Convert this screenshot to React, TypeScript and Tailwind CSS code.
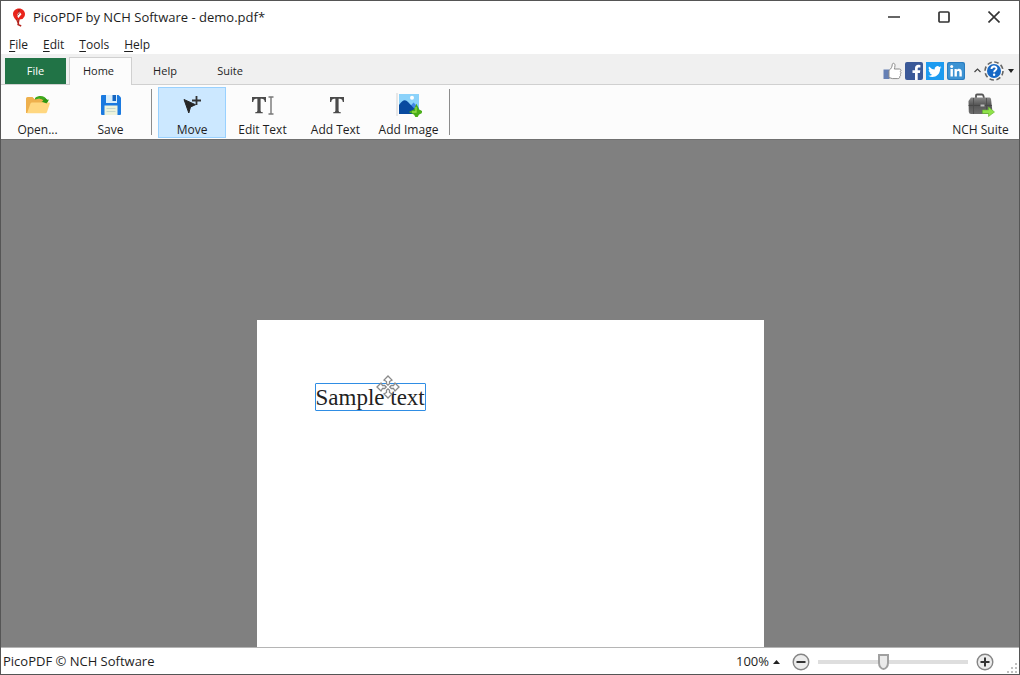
import { useState } from "react";
import type { ReactNode } from "react";

const UI_FONT = "font-['Open_Sans','Noto_Sans',sans-serif]";

const menus = ["File", "Edit", "Tools", "Help"];

function LogoIcon() {
  return (
    <svg width="14" height="20" viewBox="0 0 14 20">
      <path d="M7 1.500C3.500 1.500 1 4 1 7c0 2.600 1.500 4.300 3 6l3.500-.4L10.500 12C12 10.500 13 9 13 7c0-3-2.500-5.500-6-5.500z" fill="#e9251c" />
      <path d="M7.200 4.500l2.300 2.800-3.300 4L5 8z" fill="#fff" />
      <path d="M7 2v4.500l-1.500 2" fill="none" stroke="#8e1611" strokeWidth="1" />
      <path d="M4.500 12l2.300 5.500M7 12l-1 5.500 3.200 1.500" fill="none" stroke="#b3221b" strokeWidth="1.400" />
    </svg>
  );
}

function OpenIcon() {
  return (
    <svg width="26" height="22" viewBox="0 0 26 22">
      <path d="M1 4.500q0-1.500 1.500-1.500h5l2 2h10q1.500 0 1.500 1.500V19H1z" fill="#eeb04d" />
      <path d="M10 4c4-3 10-2.500 12 2l2-.5-2.500 5-5-3 2-.6C17 4.500 14 4 10 5.500z" fill="#3fa81c" />
      <path d="M5.500 9.500q.3-1 1.500-1h17q1.200 0 .8 1.200L22 18q-.4 1.200-1.600 1.200H2z" fill="#ffd780" />
      <path d="M20 4.500l3 1.500-1.500 3.500-4-2z" fill="#2f9413" />
    </svg>
  );
}

function SaveIcon() {
  return (
    <svg width="22" height="22" viewBox="0 0 22 22">
      <path d="M2 1h16.500L21 3.500V20q0 1-1 1H2q-1 0-1-1V2q0-1 1-1z" fill="#1b7ae0" />
      <path d="M6 1h11v8H6z" fill="#d9eefb" />
      <path d="M12.500 1H16v6h-3.500z" fill="#1565c0" />
      <path d="M4.500 11.500h13V21h-13z" fill="#eef3dc" />
      <path d="M6.500 14.500h9M6.500 17.500h9" stroke="#c6d8cc" />
    </svg>
  );
}

function MoveIcon() {
  return (
    <svg width="22" height="22" viewBox="0 0 22 22">
      <path d="M3 5.500l11.500 5.200-5 2.300-1.700 6z" fill="#262626" stroke="#262626" strokeWidth="1" strokeLinejoin="round" />
      <path d="M15.500 2v9M11 6.500h9" stroke="#333" strokeWidth="1.800" />
    </svg>
  );
}

function TIcon({ cursor = false }: { cursor?: boolean }) {
  return (
    <svg width="26" height="22" viewBox={cursor ? "0 0 26 22" : "-5 0 26 22"}>
      <path d="M2 3h14v5h-1.200q-.5-3.200-3-3.200h-1.200v12q0 1.500 2.200 1.500v1H5.200v-1q2.200 0 2.200-1.500v-12H6.200Q3.700 4.800 3.200 8H2z" fill="#4b4b4b" />
      {cursor && <path d="M18.500 3h5M18.500 20h5M21 3v17" stroke="#777" strokeWidth="1.400" />}
    </svg>
  );
}

function ImageIcon() {
  return (
    <svg width="26" height="24" viewBox="0 0 26 24">
      <path d="M1 0v23" stroke="#d2d2d2" />
      <path d="M3 1h20v20H3z" fill="#8bd2fa" />
      <circle cx="16" cy="4.800" r="2" fill="#fff" />
      <path d="M11 17l6.500-7.500L23 15v6H11z" fill="#4387e6" />
      <path d="M3 12q5-7.500 9-3l9.500 10v2H3z" fill="#084a9f" />
      <path d="M20.500 12.500l2 4.500 4 2-4 2-2 3.500-2-3.500-4-2 4-2z" fill="#4aae17" stroke="#4aae17" strokeWidth="1.500" />
      <path d="M20 14v5h-4" fill="none" stroke="#96dc4a" strokeWidth="1.300" />
    </svg>
  );
}

function SuiteIcon() {
  return (
    <svg width="28" height="24" viewBox="0 0 28 24">
      <defs>
        <linearGradient id="case" x1="0" y1="0" x2="0" y2="1">
          <stop offset="0" stopColor="#8a8a8a" />
          <stop offset=".45" stopColor="#555" />
          <stop offset="1" stopColor="#6e6e6e" />
        </linearGradient>
      </defs>
      <path d="M9 5V2.500q0-1 1-1h5q1 0 1.300 1L17 5" fill="none" stroke="#555" strokeWidth="1.800" />
      <path d="M4 4.500h18.500q1.300 0 1.500 1.500l1.500 13q0 2-2 2H4q-2 0-2.200-2L1.500 8z" fill="url(#case)" />
      <path d="M1.500 12.500h23.500" stroke="#444" strokeWidth=".8" />
      <path d="M6.500 5v16M19.500 5v14" stroke="#4a4a4a" strokeWidth=".8" />
      <path d="M13.500 11.500h4v2h-4z" fill="#bbb" />
      <path d="M15.500 17h6v-3l6 5-6 4.500v-3h-6z" fill="#8fe24a" stroke="#65b52c" strokeWidth=".6" />
    </svg>
  );
}

function LikeIcon() {
  return (
    <svg width="19" height="18" viewBox="0 0 19 18">
      <path d="M.5 7.500h6V17h-6z" fill="#6680b5" />
      <path d="M6 8.500c2.500-2 3-3.500 3.300-6.200C9.500.8 12 .7 12 3.500c0 1.500-.5 2.500-.7 3.500h5c2 0 2.200 2 1 2.600 1 .7.900 2-.2 2.600.8.700.6 2-.5 2.400.3 1.300-.4 2-1.800 2H9.300L6 15.500z" fill="#fff" stroke="#8b8b8b" strokeWidth="1" />
    </svg>
  );
}

function FacebookIcon() {
  return (
    <svg width="18" height="18" viewBox="0 0 18 18">
      <rect width="18" height="18" rx="2" fill="#3b5998" />
      <path d="M10 18v-7H7.500V8.200H10V6.300C10 4 11.300 2.800 13.400 2.800l2 .1v2.500H14c-1.100 0-1.300.6-1.300 1.300v1.500h2.600l-.4 2.800h-2.200v7z" fill="#fff" />
    </svg>
  );
}

function TwitterIcon() {
  return (
    <svg width="18" height="18" viewBox="0 0 18 18">
      <rect width="18" height="18" fill="#1d9bf0" />
      <path d="M15.500 5.200l-1.500.5 1.200-1.500-1.800.7a2.900 2.900 0 0 0-4.800 2.500A7.800 7.800 0 0 1 3 4.500c-.7 1.300-.3 2.900.9 3.700l-1.200-.3c0 1.300.9 2.500 2.200 2.800l-1.200.1c.4 1 1.400 1.800 2.600 1.900A5.600 5.600 0 0 1 2.300 13.800c4.800 3 11.800.3 11.800-7z" fill="#fff" />
    </svg>
  );
}

function LinkedinIcon() {
  return (
    <svg width="18" height="18" viewBox="0 0 18 18">
      <rect width="18" height="18" rx="2" fill="#2a7dc0" />
      <rect x="1" y="1" width="16" height="16" rx="2" fill="#3d93d3" />
      <circle cx="4.700" cy="4.500" r="1.500" fill="#fff" />
      <path d="M3.500 7h2.400v7.500H3.500zM7.500 7h2.300v1c1.200-1.900 5-1.600 5 1.900v4.600h-2.400v-4.100c0-2-2.500-1.800-2.500 0v4.100H7.500z" fill="#fff" />
    </svg>
  );
}

function HelpIcon() {
  return (
    <svg width="20" height="20" viewBox="0 0 20 20">
      <circle cx="10" cy="10" r="9" fill="#f6f6f6" stroke="#666" strokeWidth="1.600" strokeDasharray="4.500 2.570" />
      <circle cx="10" cy="10" r="7" fill="#1768c5" />
      <path d="M7.500 8c0-3.300 5-3.300 5-.5 0 1.800-2.400 1.900-2.400 3.800" fill="none" stroke="#fff" strokeWidth="1.900" />
      <circle cx="10.100" cy="13.800" r="1.200" fill="#fff" />
    </svg>
  );
}

function MoveCursor() {
  return (
    <svg width="24" height="24" viewBox="0 0 24 24">
      <path
        d="M12 1l4 4-2.500 1.500v2.200L12 10.200l-1.500-1.500V6.500L8 5zM23 12l-4 4-1.500-2.500h-2.200L13.800 12l1.500-1.500h2.200L19 8zM12 23l-4-4 2.500-1.500v-2.200l1.500-1.500 1.500 1.500v2.200L16 19zM1 12l4-4 1.500 2.500h2.200l1.500 1.500-1.500 1.500H6.500L5 16z"
        fill="#fff"
        stroke="#8a8a8a"
        strokeWidth="1.300"
      />
    </svg>
  );
}

function ZoomIcon({ plus = false }: { plus?: boolean }) {
  return (
    <svg width="18" height="18" viewBox="0 0 18 18">
      <circle cx="9" cy="9" r="7.800" fill="#ececec" stroke="#858585" strokeWidth="1.400" />
      <path d={plus ? "M4.500 9h9M9 4.500v9" : "M4.500 9h9"} stroke="#333" strokeWidth="2" />
    </svg>
  );
}

function ToolButton({ label, icon, active, onClick }: { label: string; icon: ReactNode; active?: boolean; onClick?: () => void }) {
  return (
    <button
      onClick={onClick}
      className={
        active
          ? "flex h-[51px] w-[68px] flex-col items-center border border-[#99d1ff] bg-[#cce8ff]"
          : "flex h-[51px] w-[73px] flex-col items-center border border-transparent"
      }
    >
      <span className="flex h-[35px] items-center">{icon}</span>
      <span className="whitespace-nowrap text-[12px] leading-[14px]">{label}</span>
    </button>
  );
}

export default function App() {
  const [tool, setTool] = useState("Move");
  const [zoom, setZoom] = useState(43);

  const editTools = [
    { label: "Move", icon: <MoveIcon /> },
    { label: "Edit Text", icon: <TIcon cursor /> },
    { label: "Add Text", icon: <TIcon /> },
    { label: "Add Image", icon: <ImageIcon /> },
  ];

  return (
    <div className={`flex h-screen flex-col overflow-hidden border border-[#555] bg-white text-[#1e1e1e] ${UI_FONT}`}>
      {/* Title bar */}
      <header className="flex h-8 shrink-0 items-center justify-between pl-[11px]">
        <div className="flex items-center gap-[7px]">
          <LogoIcon />
          <h1 className="text-[13px] leading-4">PicoPDF by NCH Software - demo.pdf*</h1>
        </div>
        <div className="flex">
          <button aria-label="Minimize" className="flex h-8 w-[50px] items-center justify-center">
            <svg width="12" height="12" viewBox="0 0 12 12"><path d="M0 6h12" stroke="#333" strokeWidth="1.500" /></svg>
          </button>
          <button aria-label="Maximize" className="flex h-8 w-[50px] items-center justify-center">
            <svg width="12" height="12" viewBox="0 0 12 12"><rect x="1" y="1" width="10" height="10" rx="1" fill="none" stroke="#333" strokeWidth="1.700" /></svg>
          </button>
          <button aria-label="Close" className="flex h-8 w-[50px] items-center justify-center">
            <svg width="12" height="12" viewBox="0 0 12 12"><path d="M.5.500l11 11M11.500.500l-11 11" stroke="#333" strokeWidth="1.600" /></svg>
          </button>
        </div>
      </header>

      {/* Menu bar */}
      <nav className="flex h-[21px] shrink-0 items-end gap-[15px] px-2">
        {menus.map((m) => (
          <button key={m} className="text-[12px] leading-[18px]">
            <span className="underline underline-offset-2">{m[0]}</span>
            {m.slice(1)}
          </button>
        ))}
      </nav>

      {/* Ribbon tabs */}
      <div className="flex h-[31px] shrink-0 items-end justify-between border-b border-[#d0d0d0] bg-[#f0f0f0] pl-1 text-[11px]">
        <div className="flex items-end gap-[3px]">
          <button className="h-[26px] w-[61px] bg-[#217346] text-white">File</button>
          <button className="-mb-px h-[28px] w-[63px] border border-b-0 border-[#d0d0d0] bg-[#fcfcfc] pr-1">Home</button>
          <button className="h-[26px] w-[60px]">Help</button>
          <button className="h-[26px] w-[64px]">Suite</button>
        </div>
        <div className="flex h-[28px] items-center gap-[3px] pr-[5px] pt-px">
          <a href="#like" aria-label="Like"><LikeIcon /></a>
          <a href="#facebook" aria-label="Facebook"><FacebookIcon /></a>
          <a href="#twitter" aria-label="Twitter"><TwitterIcon /></a>
          <a href="#linkedin" aria-label="LinkedIn"><LinkedinIcon /></a>
          <button aria-label="Collapse ribbon" className="flex w-[13px] justify-end">
            <svg width="7" height="5" viewBox="0 0 7 5"><path d="M.5 4l3-3 3 3" fill="none" stroke="#444" strokeWidth="1.200" /></svg>
          </button>
          <button aria-label="Help options" className="flex items-center gap-1">
            <HelpIcon />
            <svg width="6" height="4" viewBox="0 0 6 4"><path d="M0 0h6L3 4z" fill="#222" /></svg>
          </button>
        </div>
      </div>

      {/* Toolbar */}
      <div className="flex h-[54px] shrink-0 items-center justify-between bg-[#fcfcfc]">
        <div className="flex items-center">
          <ToolButton label="Open..." icon={<OpenIcon />} />
          <ToolButton label="Save" icon={<SaveIcon />} />
          <div className="ml-1 mr-[6px] h-[46px] w-px bg-[#8c8c8c]" />
          {editTools.map((t) => (
            <ToolButton key={t.label} label={t.label} icon={t.icon} active={tool === t.label} onClick={() => setTool(t.label)} />
          ))}
          <div className="ml-1 h-[46px] w-px bg-[#8c8c8c]" />
        </div>
        <div className="pr-[2px]">
          <ToolButton label="NCH Suite" icon={<SuiteIcon />} />
        </div>
      </div>

      {/* Document */}
      <main className="flex min-h-0 flex-1 justify-center overflow-hidden border-t border-[#707070] bg-[#808080] pt-[180px]">
        <div className="w-[507px] bg-white pl-[58px] pt-[63px]">
          <div className="relative w-fit rounded-[1px] border border-[#2f8de4] pb-px pt-[2px] font-['Liberation_Serif',serif] text-[23px] leading-[23px] text-[#222]">
            Sample text
            <span className="absolute -top-[9px] left-[60px]"><MoveCursor /></span>
          </div>
        </div>
      </main>

      {/* Status bar */}
      <footer className="flex h-[27px] shrink-0 items-center justify-between border-t border-[#b5b5b5] pl-[2px] pt-[2px] text-[13px]">
        <span>PicoPDF © NCH Software</span>
        <div className="flex h-full items-center">
          <button className="flex items-center gap-1">
            100%
            <svg width="7" height="4" viewBox="0 0 7 4"><path d="M0 4h7L3.500 0z" fill="#222" /></svg>
          </button>
          <button aria-label="Zoom out" className="ml-3"><ZoomIcon /></button>
          <input
            type="range"
            aria-label="Zoom"
            min={0}
            max={100}
            value={zoom}
            onChange={(e) => setZoom(Number(e.target.value))}
            className="mx-2 h-4 w-[150px] appearance-none bg-transparent [&::-webkit-slider-runnable-track]:h-1 [&::-webkit-slider-runnable-track]:bg-[#dedede] [&::-webkit-slider-thumb]:-mt-[6px] [&::-webkit-slider-thumb]:h-4 [&::-webkit-slider-thumb]:w-[11px] [&::-webkit-slider-thumb]:appearance-none [&::-webkit-slider-thumb]:border-2 [&::-webkit-slider-thumb]:border-[#a0a0a0] [&::-webkit-slider-thumb]:bg-[#eaeaea] [&::-webkit-slider-thumb]:[border-radius:0_0_6px_6px/0_0_8px_8px]"
          />
          <button aria-label="Zoom in"><ZoomIcon plus /></button>
          <svg width="12" height="12" viewBox="0 0 12 12" className="ml-3 mr-px self-end">
            <path d="M9 1h2v2H9zM9 5h2v2H9zM5 5h2v2H5zM9 9h2v2H9zM5 9h2v2H5zM1 9h2v2H1z" fill="#c0c0c0" />
          </svg>
        </div>
      </footer>
    </div>
  );
}
